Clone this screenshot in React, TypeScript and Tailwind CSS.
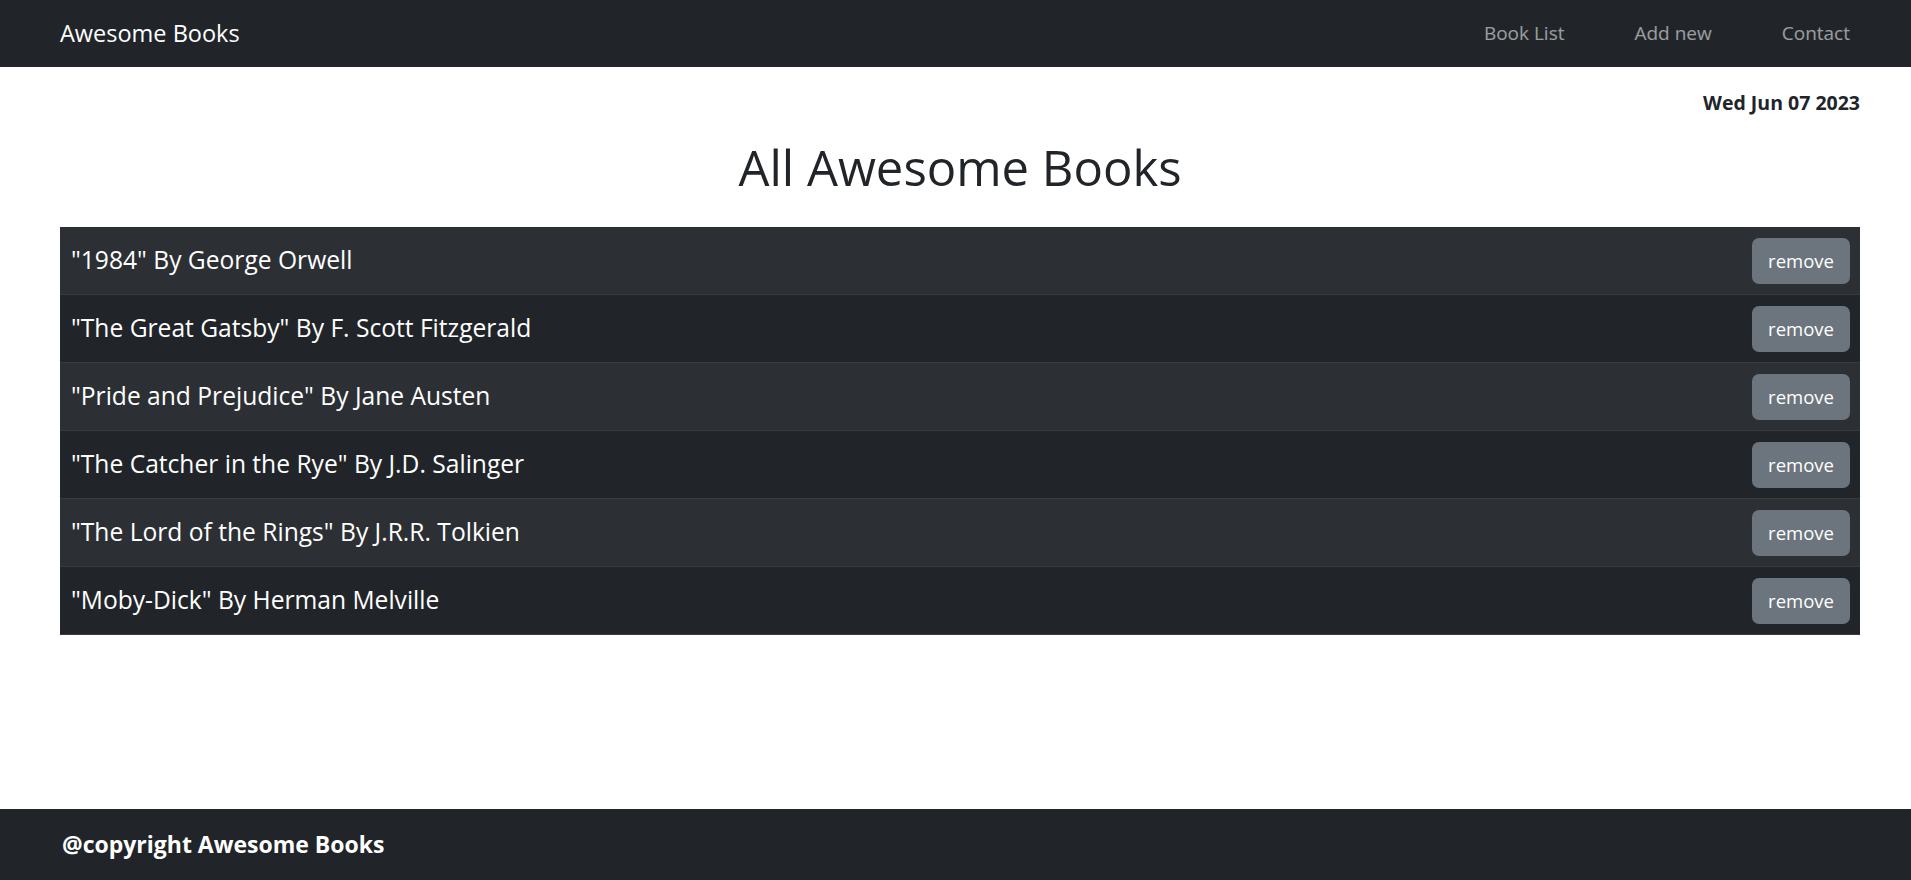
const books = [
  { title: '1984', author: 'George Orwell' },
  { title: 'The Great Gatsby', author: 'F. Scott Fitzgerald' },
  { title: 'Pride and Prejudice', author: 'Jane Austen' },
  { title: 'The Catcher in the Rye', author: 'J.D. Salinger' },
  { title: 'The Lord of the Rings', author: 'J.R.R. Tolkien' },
  { title: 'Moby-Dick', author: 'Herman Melville' },
];

export default function App() {
  return (
    <div className="min-h-screen flex flex-col bg-white text-[#212529] font-['Segoe_UI','Open_Sans',sans-serif]">
      <nav className="h-[67px] bg-[#212529] flex items-center justify-between pl-[60px] pr-[61px]">
        <a href="#" className="text-[23.5px] text-white">Awesome Books</a>
        <ul className="flex gap-[70px] text-[19px] text-white/55">
          <li><a href="#">Book List</a></li>
          <li><a href="#">Add new</a></li>
          <li><a href="#">Contact</a></li>
        </ul>
      </nav>

      <main className="pl-[60px] pr-[51px]">
        <p className="mt-[23px] text-right font-bold text-[19.5px] leading-[26px]">Wed Jun 07 2023</p>
        <h1 className="mt-[21px] mb-[30px] text-center text-[49px] leading-[60px]">All Awesome Books</h1>
        <ul>
          {books.map((book, i) => (
            <li
              key={book.title}
              className={`h-[68px] flex items-center justify-between pl-[11px] pr-[10px] border-b border-[#373b3e] ${i % 2 === 0 ? 'bg-[#2c3034]' : 'bg-[#212529]'}`}
            >
              <span className="text-[24.6px] text-white">"{book.title}" By {book.author}</span>
              <button type="button" className="w-[98px] h-[46px] rounded-[7px] bg-[#6c757d] text-white text-[18.5px]">
                remove
              </button>
            </li>
          ))}
        </ul>
      </main>

      <footer className="mt-auto h-[71px] bg-[#212529] flex items-center pl-[62px]">
        <p className="text-[23px] font-bold text-white">@copyright Awesome Books</p>
      </footer>
    </div>
  );
}
